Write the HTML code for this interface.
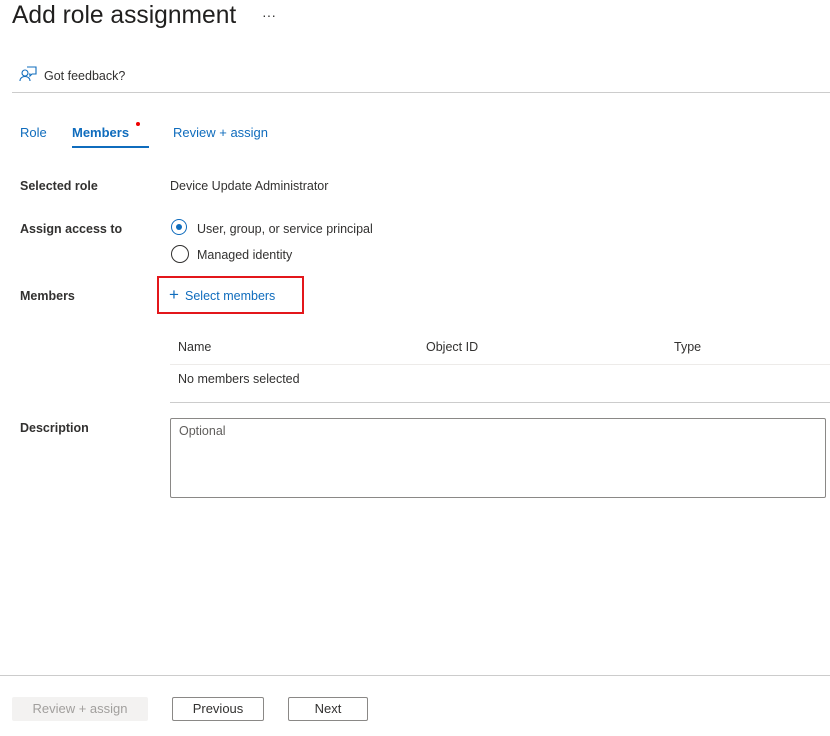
<!DOCTYPE html>
<html><head><meta charset="utf-8"><style>
body{margin:0;width:830px;height:736px;background:#fff;font-family:"Liberation Sans",sans-serif;font-size:13px;color:#323130;position:relative;overflow:hidden}
.a{position:absolute;white-space:nowrap;line-height:16px}
.b{font-weight:bold}
.blue{color:#0f6cbd}
.btn{position:absolute;box-sizing:border-box;height:24px;border:1px solid #8a8886;border-radius:2px;text-align:center;line-height:22px;font-size:13px;color:#323130}
</style></head><body>
<div class="a" style="left:12px;top:2px;font-size:24.6px;line-height:28px;color:#201f1e">Add role assignment</div>
<div class="a" style="left:262px;top:7px;font-size:14px">···</div>
<svg class="a" style="left:19px;top:66px" width="18" height="16" viewBox="0 0 18 16" fill="none" stroke="#0f6cbd" stroke-width="1.1"><circle cx="6" cy="7" r="3"/><path d="M1 15c0-3 2.5-4.5 5-4.5s5 1.5 5 4.5"/><path d="M8 1h9v7h-4l-2 2v-2h-1"/></svg>
<div class="a" style="left:44px;top:68px;font-size:12.5px">Got feedback?</div>
<div style="position:absolute;left:12px;top:92px;width:818px;height:1px;background:#ccc"></div>
<div class="a blue" style="left:20px;top:125px">Role</div>
<div class="a b blue" style="left:72px;top:125px;font-weight:600">Members</div>
<div style="position:absolute;left:136px;top:122px;width:4px;height:4px;border-radius:50%;background:#e00"></div>
<div style="position:absolute;left:72px;top:146px;width:77px;height:2px;background:#0f6cbd"></div>
<div class="a blue" style="left:173px;top:125px">Review + assign</div>
<div class="a b" style="left:20px;top:178px;font-size:12.5px">Selected role</div>
<div class="a" style="left:170px;top:178px;font-size:12.5px">Device Update Administrator</div>
<div class="a b" style="left:20px;top:221px;font-size:12.5px">Assign access to</div>
<div style="position:absolute;left:171px;top:219px;width:16px;height:16px;box-sizing:border-box;border:1px solid #0f6cbd;border-radius:50%"></div>
<div style="position:absolute;left:176px;top:224px;width:6px;height:6px;border-radius:50%;background:#0f6cbd"></div>
<div class="a" style="left:197px;top:221px;font-size:12.5px">User, group, or service principal</div>
<div style="position:absolute;left:171px;top:245px;width:18px;height:18px;box-sizing:border-box;border:1px solid #323130;border-radius:50%"></div>
<div class="a" style="left:197px;top:247px;font-size:12.5px">Managed identity</div>
<div class="a b" style="left:20px;top:288px;font-size:12.5px">Members</div>
<div style="position:absolute;left:157px;top:276px;width:147px;height:38px;box-sizing:border-box;border:2px solid #e3171b"></div>
<div class="a blue" style="left:169px;top:287px;font-size:17px;font-weight:300">+</div>
<div class="a blue" style="left:185px;top:288px;font-size:12.5px">Select members</div>
<div class="a" style="left:178px;top:339px;font-size:12.5px">Name</div>
<div class="a" style="left:426px;top:339px;font-size:12.5px">Object ID</div>
<div class="a" style="left:674px;top:339px;font-size:12.5px">Type</div>
<div style="position:absolute;left:170px;top:364px;width:660px;height:1px;background:#edebe9"></div>
<div class="a" style="left:178px;top:371px;font-size:12.5px">No members selected</div>
<div style="position:absolute;left:170px;top:402px;width:660px;height:1px;background:#ccc"></div>
<div class="a b" style="left:20px;top:420px;font-size:12.5px">Description</div>
<div style="position:absolute;left:170px;top:418px;width:656px;height:80px;box-sizing:border-box;border:1px solid #8a8886;border-radius:2px"></div>
<div class="a" style="left:179px;top:423px;font-size:12.5px;color:#605e5c">Optional</div>
<div style="position:absolute;left:0;top:675px;width:830px;height:1px;background:#ccc"></div>
<div class="btn" style="left:12px;top:697px;width:136px;border:none;background:#f3f2f1;color:#a19f9d;line-height:24px">Review + assign</div>
<div class="btn" style="left:172px;top:697px;width:92px">Previous</div>
<div class="btn" style="left:288px;top:697px;width:80px">Next</div>
</body></html>
